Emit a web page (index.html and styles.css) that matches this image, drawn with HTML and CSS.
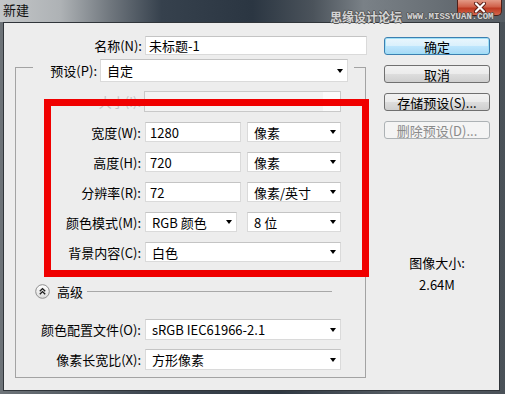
FILE: index.html
```html
<!DOCTYPE html>
<html>
<head>
<meta charset="UTF-8">
<title>新建</title>
<link rel="stylesheet" href="styles.css">
</head>
<body>
    <div id="window" class="window">
        <div id="titlebar" class="titlebar">
            <span class="title">新建</span>
            <div class="close-button">
                <svg width="14" height="11" viewBox="0 0 14 11">
                    <path d="M3 1.5 L11 9.5 M11 1.5 L3 9.5" stroke="#5a1d14" stroke-width="4" stroke-linecap="round"/>
                    <path d="M3 1.5 L11 9.5 M11 1.5 L3 9.5" stroke="#ffffff" stroke-width="2.2" stroke-linecap="round"/>
                </svg>
            </div>
            <div class="watermark"><span class="wm-cn">思缘设计论坛</span><span class="wm-en">WWW.MISSYUAN.COM</span></div>
        </div>
        <div id="client" class="client">
            <div id="left-pane" class="left-pane">
                <div class="row name-row">
                    <span class="label name-label">名称(N):</span>
                    <span class="textbox name-box">未标题-1</span>
                </div>
                <fieldset class="preset-group">
                    <legend class="preset-legend"><span class="legend-label">预设(P):</span><span class="combo preset-combo">自定</span></legend>
                    <div class="row row-size">
                        <span class="label label-disabled">大小(I):</span>
                        <span class="combo-disabled"><span class="combo-disabled-btn"></span></span>
                    </div>
                    <div class="row">
                        <span class="label">宽度(W):</span>
                        <span class="textbox num-box">1280</span>
                        <span class="combo unit-combo">像素</span>
                    </div>
                    <div class="row">
                        <span class="label">高度(H):</span>
                        <span class="textbox num-box">720</span>
                        <span class="combo unit-combo">像素</span>
                    </div>
                    <div class="row">
                        <span class="label">分辨率(R):</span>
                        <span class="textbox num-box">72</span>
                        <span class="combo unit-combo">像素/英寸</span>
                    </div>
                    <div class="row">
                        <span class="label">颜色模式(M):</span>
                        <span class="combo mode-combo">RGB 颜色</span>
                        <span class="combo bit-combo">8 位</span>
                    </div>
                    <div class="row">
                        <span class="label">背景内容(C):</span>
                        <span class="combo wide-combo">白色</span>
                    </div>
                    <div class="row advanced-row">
                        <svg class="advanced-icon" width="15" height="15" viewBox="0 0 15 15">
                            <defs>
                                <linearGradient id="adv" x1="0" y1="0" x2="0" y2="1">
                                    <stop offset="0" stop-color="#ffffff"/>
                                    <stop offset="1" stop-color="#dcdcdc"/>
                                </linearGradient>
                            </defs>
                            <circle cx="7.5" cy="7.5" r="6.8" fill="url(#adv)" stroke="#8e8e8e" stroke-width="1"/>
                            <path d="M4.8 7.2 L7.5 4.6 L10.2 7.2 M4.8 10.2 L7.5 7.6 L10.2 10.2" fill="none" stroke="#1e1e1e" stroke-width="1.4"/>
                        </svg>
                        <span class="advanced-text">高级</span>
                        <span class="advanced-line"></span>
                    </div>
                    <div class="row row-tall row-profile">
                        <span class="label">颜色配置文件(O):</span>
                        <span class="combo wide-combo">sRGB IEC61966-2.1</span>
                    </div>
                    <div class="row row-tall row-aspect">
                        <span class="label">像素长宽比(X):</span>
                        <span class="combo wide-combo">方形像素</span>
                    </div>
                </fieldset>
            </div>
            <div id="right-pane" class="right-pane">
                <div class="button button-default">确定</div>
                <div class="button">取消</div>
                <div class="button">存储预设(S)...</div>
                <div class="button button-disabled">删除预设(D)...</div>
                <div class="image-size">
                    <p>图像大小:</p>
                    <p>2.64M</p>
                </div>
            </div>
        </div>
        <div class="red-mark"></div>
    </div>
</body>
</html>
```

FILE: styles.css
```css
* {
margin: 0;
padding: 0;
box-sizing: border-box;
}

html, body {
width: 505px;
height: 394px;
overflow: hidden;
font-family: "Noto Sans CJK SC", "Microsoft YaHei", sans-serif;
font-size: 13px;
color: #000;
}

.window {
position: relative;
width: 505px;
height: 394px;
background: linear-gradient(90deg, #6d7378 0%, #3d4650 30%, #2f3842 55%, #575e65 80%, #4a5158 100%);
}

.titlebar {
height: 22px;
display: flex;
background: linear-gradient(90deg, #c3c6c8 0%, #aeb2b5 12%, #6f767d 22%, #36414d 32%, #2b3642 50%, #4b535b 62%, #7a8187 72%, #6a7177 85%, #555c63 100%);
}

.title {
padding-left: 3px;
line-height: 20px;
color: #111;
}

.close-button {
margin-left: auto;
margin-right: 3px;
width: 45px;
height: 16px;
border: 1px solid #4e2019;
border-top: 0;
border-radius: 0 0 5px 5px;
background: linear-gradient(#e39a86 0%, #d0614a 45%, #bd3a22 55%, #d4654a 100%);
display: flex;
align-items: center;
justify-content: center;
}

.watermark {
position: absolute;
left: 330px;
top: 8px;
display: flex;
align-items: center;
white-space: nowrap;
}

.wm-cn {
font-size: 12px;
font-weight: bold;
color: #d4d4d4;
text-shadow: -1px 0 #555, 1px 0 #555, 0 -1px #555, 0 1px #555;
}

.wm-en {
margin-left: 5px;
font-family: "Liberation Mono", monospace;
font-size: 9px;
font-weight: bold;
color: #d4d4d4;
text-shadow: -1px 0 #555, 1px 0 #555, 0 -1px #555, 0 1px #555;
}

.client {
display: flex;
margin-left: 3px;
width: 497px;
height: 369px;
border: 1px solid #30353a;
background-color: #ededed;
}

.left-pane {
width: 368px;
padding-top: 13px;
}

.row {
display: flex;
align-items: center;
height: 20px;
margin-top: 10px;
}

.label {
width: 125px;
margin-right: 4px;
text-align: right;
white-space: nowrap;
}

.label-disabled {
color: #c4c4c4;
}

.name-row {
margin-top: 0;
height: 19px;
}

.name-label {
width: 138px;
margin-right: 3px;
}

.textbox, .combo {
height: 100%;
display: flex;
align-items: center;
background-color: #fff;
border: 1px solid #dadada;
border-top-color: #c4c4c4;
white-space: nowrap;
}

.textbox {
padding-left: 4px;
}

.name-box {
width: 222px;
padding-left: 3px;
}

.combo {
padding-left: 6px;
}

.combo::after {
content: "";
margin-left: auto;
margin-right: 4px;
border-left: 3.5px solid transparent;
border-right: 3.5px solid transparent;
border-top: 4px solid #000;
}

.preset-group {
margin-left: 11px;
margin-top: -2px;
width: 351px;
border: 1px solid #a3a3a3;
padding: 0 0 7px 0;
}

.preset-legend {
margin-left: 17px;
padding-right: 6px;
padding-top: 6px;
height: 29px;
line-height: 23px;
white-space: nowrap;
font-size: 0;
}

.legend-label {
display: inline-block;
vertical-align: top;
width: 64px;
margin-right: 3px;
text-align: right;
font-size: 13px;
}

.preset-combo {
display: inline-flex;
vertical-align: top;
width: 248px;
height: 23px;
font-size: 13px;
}

.row-size {
margin-top: 9px;
height: 21px;
}

.combo-disabled {
display: flex;
width: 197px;
height: 100%;
margin-left: -1px;
background-color: #f3f3f3;
border: 1px solid #c9c9c9;
}

.combo-disabled-btn {
margin-left: auto;
width: 17px;
background-color: #fbfbfb;
}

.num-box {
width: 96px;
}

.unit-combo {
width: 94px;
margin-left: 6px;
}

.mode-combo {
width: 92px;
}

.bit-combo {
width: 94px;
margin-left: 10px;
}

.wide-combo {
width: 196px;
}

.advanced-row {
margin-top: 21px;
height: 16px;
padding-left: 19px;
}

.advanced-text {
margin-left: 7px;
}

.advanced-line {
flex: 1;
height: 1px;
margin-left: 4px;
margin-right: 33px;
background-color: #a8a8a8;
}

.row-tall {
height: 21px;
}

.row-profile {
margin-top: 20px;
}

.row-aspect {
margin-top: 9px;
}

.right-pane {
flex: 1;
padding-top: 14px;
padding-left: 12px;
}

.button {
width: 106px;
height: 18px;
margin-bottom: 10px;
display: flex;
align-items: center;
justify-content: center;
border: 1px solid #707070;
border-radius: 3px;
background: linear-gradient(#f2f2f2 0%, #ebebeb 50%, #dddddd 51%, #cfcfcf 100%);
white-space: nowrap;
}

.button-default {
border-color: #3c7fb1;
background: linear-gradient(#eaf6fd 0%, #d9f0fc 50%, #bee6fd 51%, #a7d9f5 100%);
box-shadow: inset 0 0 0 1px #9fe0f7;
}

.button-disabled {
border-color: #adb2b5;
background: #f4f4f4;
color: #8a8a8a;
}

.image-size {
margin-top: 113px;
width: 106px;
text-align: center;
}

.image-size p {
line-height: 22px;
}

.red-mark {
position: absolute;
left: 44px;
top: 99px;
width: 325px;
height: 178px;
border: 7px solid #f00000;
}
```
